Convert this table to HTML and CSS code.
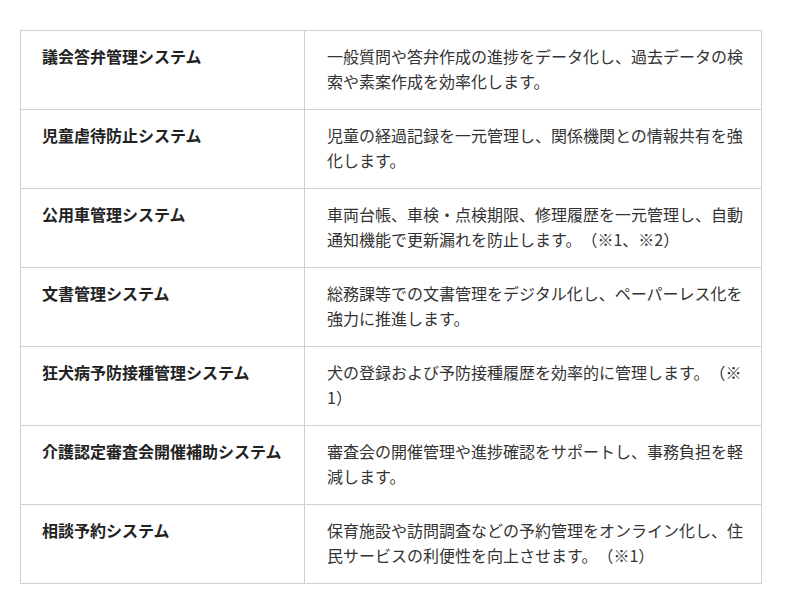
FILE: index.html
```html
<!DOCTYPE html>
<html lang="ja">
<head>
<meta charset="utf-8">
<link rel="stylesheet" href="styles.css">
</head>
<body>
<div class="wrap">
<table class="sys">
<colgroup><col class="c1"><col class="c2"></colgroup>
<tbody>
<tr><th>議会答弁管理システム</th><td>一般質問や答弁作成の進捗をデータ化し、過去データの検索や素案作成を効率化します。</td></tr>
<tr><th>児童虐待防止システム</th><td>児童の経過記録を一元管理し、関係機関との情報共有を強化します。</td></tr>
<tr><th>公用車管理システム</th><td>車両台帳、車検・点検期限、修理履歴を一元管理し、自動通知機能で更新漏れを防止します。（※1、※2）</td></tr>
<tr><th>文書管理システム</th><td>総務課等での文書管理をデジタル化し、ペーパーレス化を強力に推進します。</td></tr>
<tr><th>狂犬病予防接種管理システム</th><td>犬の登録および予防接種履歴を効率的に管理します。（※1）</td></tr>
<tr><th>介護認定審査会開催補助システム</th><td>審査会の開催管理や進捗確認をサポートし、事務負担を軽減します。</td></tr>
<tr><th>相談予約システム</th><td>保育施設や訪問調査などの予約管理をオンライン化し、住民サービスの利便性を向上させます。（※1）</td></tr>
</tbody>
</table>
</div>
</body>
</html>
```
FILE: styles.css
```css
html, body { margin: 0; padding: 0; background: #fff; }
body {
  font-family: "Noto Sans CJK JP", "Noto Sans", sans-serif;
  font-size: 16px;
  color: #333;
  text-spacing-trim: space-all;
}
.wrap { padding: 30px 38px 0 20px; }
.sys {
  width: 742px;
  border-collapse: collapse;
  table-layout: fixed;
}
.c1 { width: 284px; }
.sys th, .sys td {
  border: 1px solid #d0d0d0;
  vertical-align: top;
  text-align: left;
  line-height: 25px;
  padding: 13px 20px 15px 21px;
  height: 50px;
}
.sys th { font-weight: bold; color: #222; }
.sys td { padding-left: 22px; padding-right: 12px; line-break: anywhere; }
```
